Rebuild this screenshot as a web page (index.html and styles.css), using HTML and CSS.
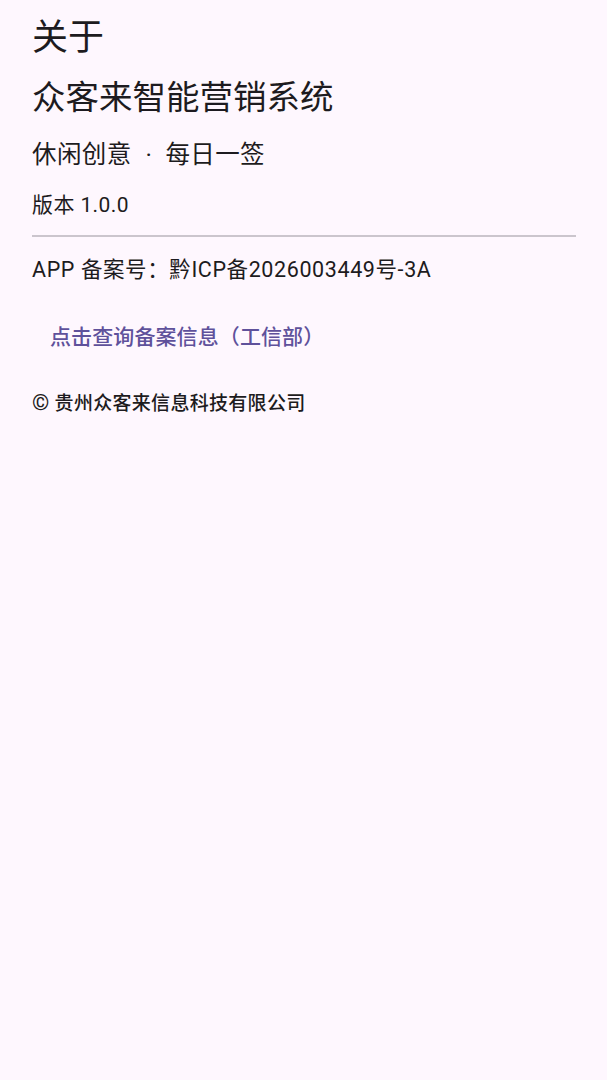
FILE: index.html
```html
<!DOCTYPE html>
<html lang="zh-CN">
<head>
    <meta charset="UTF-8">
    <meta name="viewport" content="width=device-width, initial-scale=1.0">
    <title>关于</title>
    <link rel="stylesheet" href="styles.css">
</head>
<body>
    <div class="about">
        <h1 class="page-title">关于</h1>
        <h2 class="app-name">众客来智能营销系统</h2>
        <p class="slogan">休闲创意<span class="dot">·</span>每日一签</p>
        <p class="version">版本 1.0.0</p>
        <hr class="divider">
        <p class="record">APP 备案号：黔ICP备2026003449号-3A</p>
        <a class="record-link" href="#">点击查询备案信息（工信部）</a>
        <p class="copyright"><span class="copy-mark">©</span> 贵州众客来信息科技有限公司</p>
    </div>
</body>
</html>
```

FILE: styles.css
```css
body {
    margin: 0;
    background-color: #fef7fe;
    color: #1d1b20;
    font-family: Roboto, "Noto Sans CJK SC", sans-serif;
}
.about {
    display: flex;
    flex-direction: column;
    align-items: flex-start;
    padding: 14px 31px 0 32px;
}
.page-title {
    margin: 0;
    font-size: 36px;
    font-weight: 400;
    line-height: 48px;
}
.app-name {
    margin: 13px 0 0;
    font-size: 33.5px;
    font-weight: 400;
    line-height: 46px;
}
.slogan {
    margin: 17px 0 0;
    font-size: 24.5px;
    letter-spacing: 0.4px;
    line-height: 34px;
}
.dot {
    margin: 0 13px 0 14px;
}
.version {
    margin: 18px 0 0;
    font-size: 21px;
    letter-spacing: 0.4px;
    line-height: 30px;
}
.divider {
    align-self: stretch;
    margin: 15px 0 0;
    border: none;
    border-top: 2px solid #cbc5cd;
}
.record {
    margin: 18px 0 0;
    font-size: 21.5px;
    letter-spacing: 0.6px;
    line-height: 30px;
}
.record-link {
    margin: 37px 0 0 18px;
    color: #5f519b;
    font-size: 21px;
    font-weight: 500;
    letter-spacing: 0.1px;
    line-height: 30px;
    text-decoration: none;
}
.copyright {
    margin: 37px 0 0;
    font-size: 19px;
    font-weight: 500;
    letter-spacing: 0.3px;
    line-height: 28px;
}
.copy-mark {
    font-size: 22px;
    font-weight: 400;
}
```
